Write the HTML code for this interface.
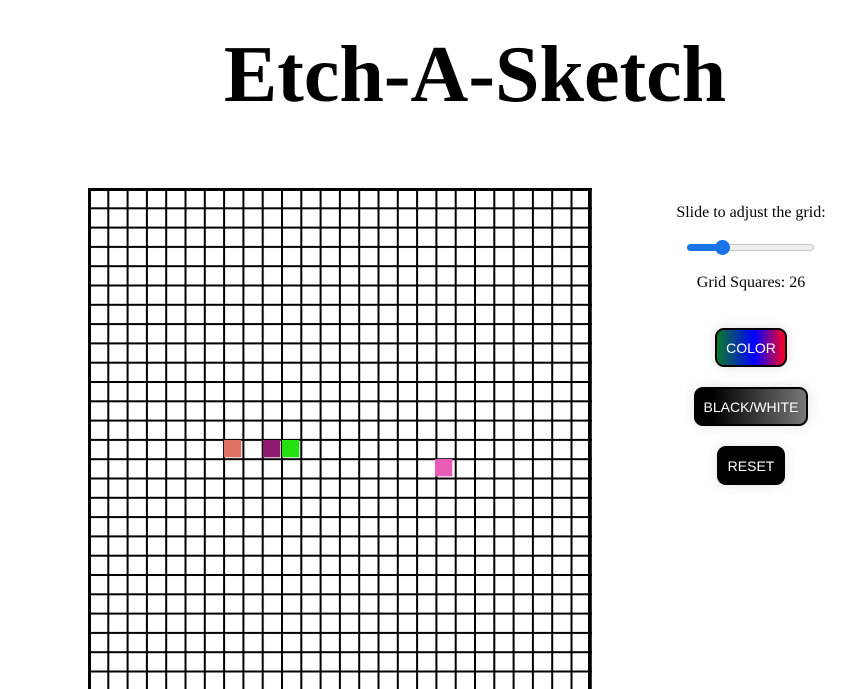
<!DOCTYPE html>
<html><head><meta charset="utf-8"><style>
body{margin:0;width:844px;height:689px;overflow:hidden;background:#fff;position:relative;font-family:"Liberation Serif",serif}
h1{position:absolute;left:2px;width:946px;top:20px;margin:0;text-align:center;font-size:80px;font-weight:bold;line-height:110px}
svg{position:absolute;left:88px;top:188px}
.t{position:absolute;left:651px;width:200px;text-align:center;font-size:16px}
.btn{position:absolute;font-family:"Liberation Sans",sans-serif;color:#fff;font-size:14px;display:flex;align-items:center;justify-content:center;border-radius:9px;box-sizing:border-box;box-shadow:0 0 12px rgba(0,0,0,0.12)}
</style></head><body>
<h1>Etch-A-Sketch</h1>
<svg width="504" height="501">
<defs><pattern id="p" width="19.3" height="19.3" patternUnits="userSpaceOnUse"><rect x="0" y="0" width="2" height="19.3" fill="#000"/><rect x="0" y="0" width="19.3" height="2" fill="#000"/></pattern></defs>
<rect width="504" height="501" fill="url(#p)"/>
<rect x="136" y="252" width="17.3" height="17.3" fill="#e07062"/>
<rect x="175" y="252" width="17.3" height="17.3" fill="#901a70"/>
<rect x="194" y="252" width="17.3" height="17.3" fill="#22e012"/>
<rect x="347" y="271" width="17.3" height="17.3" fill="#e85cb8"/>
<rect x="0" y="0" width="3" height="501" fill="#000"/>
<rect x="0" y="0" width="503" height="3" fill="#000"/>
<rect x="500" y="0" width="3" height="501" fill="#000"/>
</svg>
<div class="t" style="top:204px">Slide to adjust the grid:</div>
<div style="position:absolute;left:687px;top:244px;width:127px;height:7px;border-radius:4px;background:#efefef;border:1px solid #c8c8c8;box-sizing:border-box"></div>
<div style="position:absolute;left:687px;top:244px;width:36px;height:7px;border-radius:4px;background:#1a73e8"></div>
<div style="position:absolute;left:715px;top:240px;width:15px;height:15px;border-radius:50%;background:#1a73e8"></div>
<div class="t" style="top:274px">Grid Squares: 26</div>
<div class="btn" style="left:715px;top:328px;width:72px;height:39px;border:2px solid #000;background:linear-gradient(90deg,#0a7a2a,#0000ff 55%,#ff0020)">COLOR</div>
<div class="btn" style="left:694px;top:387px;width:114px;height:39px;border:2px solid #000;background:linear-gradient(90deg,#000 15%,#777)">BLACK/WHITE</div>
<div class="btn" style="left:717px;top:446px;width:68px;height:39px;background:#000">RESET</div>
</body></html>
